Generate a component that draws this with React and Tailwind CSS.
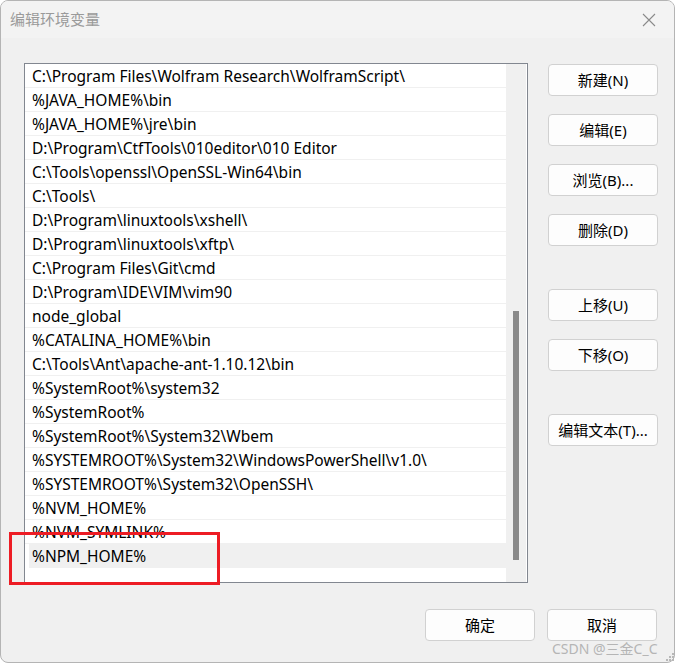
const PATHS = [
  'C:\\Program Files\\Wolfram Research\\WolframScript\\',
  '%JAVA_HOME%\\bin',
  '%JAVA_HOME%\\jre\\bin',
  'D:\\Program\\CtfTools\\010editor\\010 Editor',
  'C:\\Tools\\openssl\\OpenSSL-Win64\\bin',
  'C:\\Tools\\',
  'D:\\Program\\linuxtools\\xshell\\',
  'D:\\Program\\linuxtools\\xftp\\',
  'C:\\Program Files\\Git\\cmd',
  'D:\\Program\\IDE\\VIM\\vim90',
  'node_global',
  '%CATALINA_HOME%\\bin',
  'C:\\Tools\\Ant\\apache-ant-1.10.12\\bin',
  '%SystemRoot%\\system32',
  '%SystemRoot%',
  '%SystemRoot%\\System32\\Wbem',
  '%SYSTEMROOT%\\System32\\WindowsPowerShell\\v1.0\\',
  '%SYSTEMROOT%\\System32\\OpenSSH\\',
  '%NVM_HOME%',
  '%NVM_SYMLINK%',
  '%NPM_HOME%',
];

const SELECTED = 20;

function Btn({ children, className = '' }) {
  return (
    <button
      className={`h-[32px] w-[110px] rounded-[4px] border border-[#d1d1d1] bg-[#fdfdfd] text-[15px] text-black ${className}`}
    >
      {children}
    </button>
  );
}

export default function App() {
  return (
    <div
      className="relative h-[664px] w-[677px] bg-white"
      style={{ fontFamily: '"Noto Sans", "Noto Sans CJK SC", sans-serif' }}
    >
      <div className="flex h-[663px] w-[675px] flex-col overflow-hidden rounded-[8px] border border-[#b4b4b4] bg-[#f0f0f0]">
        {/* title bar */}
        <div className="flex h-[37px] shrink-0 items-center justify-between bg-[#f3f3f3] pl-[9px] pr-[18px]">
          <span className="text-[15px] text-[#9a9a9a]" style={{ fontFamily: '"Noto Sans CJK SC", sans-serif' }}>
            编辑环境变量
          </span>
          <svg width="14" height="14" viewBox="0 0 14 14" stroke="#8a8a8a" strokeWidth="1.1">
            <path d="M1 1 L13 13 M13 1 L1 13" />
          </svg>
        </div>

        <div className="flex pl-[23px] pt-[25px]">
          {/* list box */}
          <div className="relative flex h-[520px] w-[504px] border border-[#828790] bg-white">
            <div className="w-[481px]">
              {PATHS.map((p, i) => (
                <div
                  key={p}
                  className={`flex h-[24px] items-center border-b border-[#f0f0f0] pt-[2px] text-[15.5px] leading-none text-black ${
                    i === SELECTED ? 'ml-[4px] bg-[#f0f0f0] pl-[3px]' : 'pl-[7px]'
                  }`}
                >
                  {p}
                </div>
              ))}
            </div>
            <div className="mr-[1px] flex w-[20px] justify-center bg-[#f0f0f0]">
              <div className="mt-[247px] h-[249px] w-[6px] bg-[#8a8a8a]" />
            </div>
          </div>

          {/* right buttons */}
          <div className="ml-[20px] flex flex-col pt-[1px]">
            <Btn>新建(N)</Btn>
            <Btn className="mt-[18px]">编辑(E)</Btn>
            <Btn className="mt-[18px]">浏览(B)...</Btn>
            <Btn className="mt-[18px]">删除(D)</Btn>
            <Btn className="mt-[43px]">上移(U)</Btn>
            <Btn className="mt-[18px]">下移(O)</Btn>
            <Btn className="mt-[43px]">编辑文本(T)...</Btn>
          </div>
        </div>

        {/* footer buttons */}
        <div className="mt-[26px] flex justify-end gap-[12px] pr-[17px]">
          <Btn>确定</Btn>
          <Btn>取消</Btn>
        </div>
      </div>

      {/* highlight box */}
      <div className="absolute left-[9px] top-[532px] h-[53px] w-[211px] border-[3px] border-[#ed1c24]" />

      {/* watermark */}
      <div
        className="absolute left-[552px] top-[638px] text-[14px] text-[#b5b5b5]"
        style={{ fontFamily: '"Noto Sans", "Noto Sans CJK SC", sans-serif' }}
      >
        CSDN @三金C_C
      </div>
      <div className="absolute bottom-[3px] right-[3px] grid grid-cols-3 gap-[1px]">
        {[0, 1, 2, 3, 4, 5, 6, 7, 8].map((k) => (
          <div
            key={k}
            className={`h-[2px] w-[2px] ${k === 0 || k === 1 || k === 3 ? 'bg-transparent' : 'bg-[#b8b8b8]'}`}
          />
        ))}
      </div>
    </div>
  );
}
